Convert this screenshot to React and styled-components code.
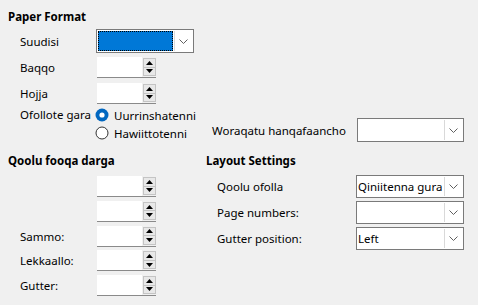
import styled, { createGlobalStyle } from "styled-components";

const GlobalStyle = createGlobalStyle`
  html, body {
    margin: 0;
    padding: 0;
    background: #f0f0f0;
  }
  body {
    font-family: "Noto Sans", "Liberation Sans", sans-serif;
    font-size: 11.5px;
    color: #000;
  }
`;

const Page = styled.div`
  width: 478px;
  height: 305px;
  box-sizing: border-box;
  padding: 9px 8px 0;
  background: #f0f0f0;
  overflow: hidden;
`;

const Title = styled.div`
  font-weight: 700;
  line-height: 16px;
  height: 16px;
  white-space: nowrap;
`;

const Row = styled.div`
  display: flex;
  align-items: center;
  padding-left: ${({ $indent }) => $indent ?? 12}px;
  margin-top: ${({ $gap }) => $gap ?? 0}px;
`;

const Label = styled.span`
  width: ${({ $w }) => $w}px;
  flex: none;
  white-space: nowrap;
`;

/* combo box */
const Combo = styled.div`
  width: ${({ $w }) => $w}px;
  height: ${({ $h }) => $h ?? 23}px;
  box-sizing: border-box;
  border: 1px solid #7a7a7a;
  background: #fff;
  display: flex;
  align-items: stretch;
  flex: none;
`;

const ComboText = styled.div`
  flex: 1;
  display: flex;
  align-items: center;
  padding-left: 1px;
  white-space: nowrap;
  overflow: hidden;
  background: ${({ $focused }) => ($focused ? "#0078d7" : "#fff")};
  outline: ${({ $focused }) => ($focused ? "1px dotted #000" : "none")};
  outline-offset: -1px;
  margin: ${({ $focused }) => ($focused ? "1px 0 1px 1px" : "0")};
`;

const ComboButton = styled.div`
  width: 17px;
  flex: none;
  margin: 1px;
  border-left: 1px solid #d9d9d9;
  display: flex;
  align-items: center;
  justify-content: center;
  background: #fff;
`;

const Chevron = () => (
  <svg width="9" height="5" viewBox="0 0 9 5">
    <path d="M0.5 0.5 L4.5 4.5 L8.5 0.5" fill="none" stroke="#606060" strokeWidth="1" />
  </svg>
);

const ComboBox = ({ w, h, value, focused }) => (
  <Combo $w={w} $h={h}>
    <ComboText $focused={focused}>{value}</ComboText>
    <ComboButton>
      <Chevron />
    </ComboButton>
  </Combo>
);

/* spin box */
const Spin = styled.div`
  width: 59px;
  height: 21px;
  box-sizing: border-box;
  margin-left: 1px;
  display: flex;
  border-bottom: 1.5px solid #8a8a8a;
  flex: none;
`;

const SpinField = styled.div`
  width: 45px;
  background: #fff;
`;

const SpinButtons = styled.div`
  width: 14px;
  display: flex;
  flex-direction: column;
  padding: 1px 0 1px 1px;
  box-sizing: border-box;
  gap: 0;
`;

const SpinButton = styled.div`
  flex: 1;
  border: 1px solid #c4c4c4;
  background: #e8e8e8;
  display: flex;
  align-items: center;
  justify-content: center;
  & + & {
    border-top: none;
  }
`;

const Tri = ({ down }) => (
  <svg width="7" height="4" viewBox="0 0 7 4">
    <path d={down ? "M0 0 H7 L3.5 4 Z" : "M0 4 H7 L3.5 0 Z"} fill="#000" />
  </svg>
);

const SpinBox = () => (
  <Spin>
    <SpinField />
    <SpinButtons>
      <SpinButton>
        <Tri />
      </SpinButton>
      <SpinButton>
        <Tri down />
      </SpinButton>
    </SpinButtons>
  </Spin>
);

/* radio */
const RadioRow = styled.div`
  height: 18px;
  display: flex;
  align-items: center;
  gap: 5px;
  white-space: nowrap;
`;

const RadioMark = ({ checked }) => (
  <svg width="14" height="14" viewBox="0 0 14 14">
    {checked ? (
      <>
        <circle cx="7" cy="7" r="6.5" fill="#0067c0" />
        <circle cx="7" cy="7" r="2.6" fill="#fff" />
      </>
    ) : (
      <circle cx="7" cy="7" r="6" fill="#fff" stroke="#333" strokeWidth="1" />
    )}
  </svg>
);

const OrientationBand = styled.div`
  display: flex;
  align-items: flex-end;
  margin-top: 2px;
  padding-left: 12px;
`;

const OrientationGroup = styled.div`
  width: 192px;
  display: flex;
  align-items: flex-start;
  flex: none;
`;

const RadioList = styled.div`
  display: flex;
  flex-direction: column;
  margin-left: -1px;
`;

const Columns = styled.div`
  display: flex;
  margin-top: 11px;
`;

const Column = styled.div`
  width: ${({ $w }) => ($w ? `${$w}px` : "auto")};
  flex: ${({ $w }) => ($w ? "none" : "1")};
  display: flex;
  flex-direction: column;
`;

const Stack = styled.div`
  display: flex;
  flex-direction: column;
  gap: ${({ $gap }) => $gap}px;
  margin-top: ${({ $top }) => $top}px;
`;

export default function App() {
  return (
    <>
      <GlobalStyle />
      <Page>
        <Title>Paper Format</Title>
        <Row $gap={4}>
          <Label $w={76}>Suudisi</Label>
          <ComboBox w={98} h={24} focused />
        </Row>
        <Row $gap={4}>
          <Label $w={76}>Baqqo</Label>
          <SpinBox />
        </Row>
        <Row $gap={5}>
          <Label $w={76}>Hojja</Label>
          <SpinBox />
        </Row>
        <OrientationBand>
          <OrientationGroup>
            <Label $w={76} style={{ lineHeight: "18px" }}>Ofollote gara</Label>
            <RadioList>
              <RadioRow>
                <RadioMark checked />
                Uurrinshatenni
              </RadioRow>
              <RadioRow>
                <RadioMark />
                Hawiittotenni
              </RadioRow>
            </RadioList>
          </OrientationGroup>
          <Row $indent={0}>
            <Label $w={145}>Woraqatu hanqafaancho</Label>
            <ComboBox w={107} h={24} />
          </Row>
        </OrientationBand>
        <Columns>
          <Column $w={198}>
            <Title>Qoolu fooqa darga</Title>
            <Stack $gap={3.8} $top={7}>
              {["", "", "Sammo:", "Lekkaallo:", "Gutter:"].map((t, i) => (
                <Row key={i}>
                  <Label $w={76}>{t}</Label>
                  <SpinBox />
                </Row>
              ))}
            </Stack>
          </Column>
          <Column>
            <Title>Layout Settings</Title>
            <Stack $gap={3} $top={6}>
              <Row $indent={11}>
                <Label $w={139}>Qoolu ofolla</Label>
                <ComboBox w={108} value="Qiniitenna gura" />
              </Row>
              <Row $indent={11}>
                <Label $w={139}>Page numbers:</Label>
                <ComboBox w={108} />
              </Row>
              <Row $indent={11}>
                <Label $w={139}>Gutter position:</Label>
                <ComboBox w={108} value="Left" />
              </Row>
            </Stack>
          </Column>
        </Columns>
      </Page>
    </>
  );
}
